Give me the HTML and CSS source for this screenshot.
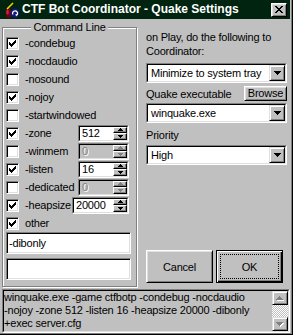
FILE: index.html
```html
<!DOCTYPE html>
<html>
<head>
<meta charset="utf-8">
<title>CTF Bot Coordinator - Quake Settings</title>
<link rel="stylesheet" href="styles.css">
</head>
<body>
<div class="window">
  <div class="titlebar">
    <svg class="appicon" width="16" height="16" viewBox="0 0 16 16">
      <ellipse cx="5.5" cy="11" rx="3" ry="5" fill="#700010"/>
      <ellipse cx="4.5" cy="10" rx="1.3" ry="2.5" fill="#b03040"/>
      <path d="M4 7 L10 1" stroke="#f0d000" stroke-width="1.6"/>
      <circle cx="12" cy="11" r="4.5" fill="#101880"/>
      <path d="M10 12.5 A2.4 2.4 0 1 1 13.5 13.2" stroke="#fff" stroke-width="1.2" fill="none"/>
      <path d="M12.5 12 L14.5 12.5 L13 14.5 Z" fill="#fff"/>
    </svg>
    <span class="title">CTF Bot Coordinator - Quake Settings</span>
    <button class="close" type="button" aria-label="Close">
      <svg width="8" height="7" viewBox="0 0 8 7"><path d="M0 0h2v1H0zM6 0h2v1H6zM1 1h2v1H1zM5 1h2v1H5zM2 2h4v1H2zM3 3h2v1H3zM2 4h4v1H2zM1 5h2v1H1zM5 5h2v1H5zM0 6h2v1H0zM6 6h2v1H6z" fill="#000"/></svg>
    </button>
  </div>

  <div class="main">
    <div class="group">
      <span class="legend">Command Line</span>

      <div class="row"><span class="cb"><svg width="7" height="7" viewBox="0 0 7 7"><path d="M6 0h1v1H6zM5 1h2v1H5zM0 2h1v1H0zM4 2h3v1H4zM0 3h2v1H0zM3 3h3v1H3zM0 4h5v1H0zM1 5h3v1H1zM2 6h1v1H2z"/></svg></span><span class="lbl">-condebug</span></div>
      <div class="row"><span class="cb"><svg width="7" height="7" viewBox="0 0 7 7"><path d="M6 0h1v1H6zM5 1h2v1H5zM0 2h1v1H0zM4 2h3v1H4zM0 3h2v1H0zM3 3h3v1H3zM0 4h5v1H0zM1 5h3v1H1zM2 6h1v1H2z"/></svg></span><span class="lbl">-nocdaudio</span></div>
      <div class="row"><span class="cb"></span><span class="lbl">-nosound</span></div>
      <div class="row"><span class="cb"><svg width="7" height="7" viewBox="0 0 7 7"><path d="M6 0h1v1H6zM5 1h2v1H5zM0 2h1v1H0zM4 2h3v1H4zM0 3h2v1H0zM3 3h3v1H3zM0 4h5v1H0zM1 5h3v1H1zM2 6h1v1H2z"/></svg></span><span class="lbl">-nojoy</span></div>
      <div class="row"><span class="cb"></span><span class="lbl">-startwindowed</span></div>

      <div class="row"><span class="cb"><svg width="7" height="7" viewBox="0 0 7 7"><path d="M6 0h1v1H6zM5 1h2v1H5zM0 2h1v1H0zM4 2h3v1H4zM0 3h2v1H0zM3 3h3v1H3zM0 4h5v1H0zM1 5h3v1H1zM2 6h1v1H2z"/></svg></span><span class="lbl">-zone</span>
        <span class="spin"><span class="spin-in"><span class="spin-text">512</span><span class="spin-btns"><span class="sbtn"><svg width="5" height="3" viewBox="0 0 5 3"><path d="M2 0h1v1h1v1h1v1H0V2h1V1h1z"/></svg></span><span class="sbtn"><svg width="5" height="3" viewBox="0 0 5 3"><path d="M0 0h5v1H4v1H3v1H2V2H1V1H0z"/></svg></span></span></span></span>
      </div>
      <div class="row"><span class="cb"></span><span class="lbl">-winmem</span>
        <span class="spin disabled"><span class="spin-in"><span class="spin-text">0</span><span class="spin-btns"><span class="sbtn"><svg width="5" height="3" viewBox="0 0 5 3"><path d="M2 0h1v1h1v1h1v1H0V2h1V1h1z"/></svg></span><span class="sbtn"><svg width="5" height="3" viewBox="0 0 5 3"><path d="M0 0h5v1H4v1H3v1H2V2H1V1H0z"/></svg></span></span></span></span>
      </div>
      <div class="row"><span class="cb"><svg width="7" height="7" viewBox="0 0 7 7"><path d="M6 0h1v1H6zM5 1h2v1H5zM0 2h1v1H0zM4 2h3v1H4zM0 3h2v1H0zM3 3h3v1H3zM0 4h5v1H0zM1 5h3v1H1zM2 6h1v1H2z"/></svg></span><span class="lbl">-listen</span>
        <span class="spin"><span class="spin-in"><span class="spin-text">16</span><span class="spin-btns"><span class="sbtn"><svg width="5" height="3" viewBox="0 0 5 3"><path d="M2 0h1v1h1v1h1v1H0V2h1V1h1z"/></svg></span><span class="sbtn"><svg width="5" height="3" viewBox="0 0 5 3"><path d="M0 0h5v1H4v1H3v1H2V2H1V1H0z"/></svg></span></span></span></span>
      </div>
      <div class="row"><span class="cb"></span><span class="lbl">-dedicated</span>
        <span class="spin disabled"><span class="spin-in"><span class="spin-text">0</span><span class="spin-btns"><span class="sbtn"><svg width="5" height="3" viewBox="0 0 5 3"><path d="M2 0h1v1h1v1h1v1H0V2h1V1h1z"/></svg></span><span class="sbtn"><svg width="5" height="3" viewBox="0 0 5 3"><path d="M0 0h5v1H4v1H3v1H2V2H1V1H0z"/></svg></span></span></span></span>
      </div>
      <div class="row"><span class="cb"><svg width="7" height="7" viewBox="0 0 7 7"><path d="M6 0h1v1H6zM5 1h2v1H5zM0 2h1v1H0zM4 2h3v1H4zM0 3h2v1H0zM3 3h3v1H3zM0 4h5v1H0zM1 5h3v1H1zM2 6h1v1H2z"/></svg></span><span class="lbl">-heapsize</span>
        <span class="spin wide"><span class="spin-in"><span class="spin-text">20000</span><span class="spin-btns"><span class="sbtn"><svg width="5" height="3" viewBox="0 0 5 3"><path d="M2 0h1v1h1v1h1v1H0V2h1V1h1z"/></svg></span><span class="sbtn"><svg width="5" height="3" viewBox="0 0 5 3"><path d="M0 0h5v1H4v1H3v1H2V2H1V1H0z"/></svg></span></span></span></span>
      </div>
      <div class="row"><span class="cb"><svg width="7" height="7" viewBox="0 0 7 7"><path d="M6 0h1v1H6zM5 1h2v1H5zM0 2h1v1H0zM4 2h3v1H4zM0 3h2v1H0zM3 3h3v1H3zM0 4h5v1H0zM1 5h3v1H1zM2 6h1v1H2z"/></svg></span><span class="lbl">other</span></div>

      <div class="field">-dibonly</div>
      <div class="field field-2"></div>
    </div>

    <div class="side">
      <p class="note">on Play, do the following to<br>Coordinator:</p>
      <div class="combo combo-1"><div class="combo-in"><span class="combo-val">Minimize to system tray</span><span class="drop"><svg width="7" height="4" viewBox="0 0 7 4"><path d="M0 0h7v1H6v1H5v1H4v1H3V3H2V2H1V1H0z"/></svg></span></div></div>
      <div class="exe-row"><span class="exe-label">Quake executable</span><button class="btn browse" type="button">Browse</button></div>
      <div class="combo combo-2"><div class="combo-in"><span class="combo-val">winquake.exe</span><span class="drop"><svg width="7" height="4" viewBox="0 0 7 4"><path d="M0 0h7v1H6v1H5v1H4v1H3V3H2V2H1V1H0z"/></svg></span></div></div>
      <p class="prio">Priority</p>
      <div class="combo combo-3"><div class="combo-in"><span class="combo-val">High</span><span class="drop"><svg width="7" height="4" viewBox="0 0 7 4"><path d="M0 0h7v1H6v1H5v1H4v1H3V3H2V2H1V1H0z"/></svg></span></div></div>
      <div class="actions">
        <button class="btn push" type="button">Cancel</button>
        <button class="btn push default" type="button"><span class="focus">OK</span></button>
      </div>
    </div>
  </div>

  <div class="output">
    <div class="output-in">
      <div class="output-text">winquake.exe -game ctfbotp -condebug -nocdaudio<br>-nojoy -zone 512 -listen 16 -heapsize 20000 -dibonly<br>+exec server.cfg</div>
      <div class="scrollbar">
        <span class="sb-btn"><svg width="8" height="5" viewBox="0 0 8 5"><path d="M4 1h1v1h1v1h1v1h1v1H1V4h1V3h1V2h1z" fill="#fff"/><path d="M3 0h1v1h1v1h1v1h1v1H0V3h1V2h1V1h1z" fill="#808080"/></svg></span>
        <span class="sb-track"></span>
        <span class="sb-btn"><svg width="8" height="5" viewBox="0 0 8 5"><path d="M1 1h7v1H7v1H6v1H5v1H4V4H3V3H2V2H1z" fill="#fff"/><path d="M0 0h7v1H6v1H5v1H4v1H3V3H2V2H1V1H0z" fill="#808080"/></svg></span>
      </div>
    </div>
  </div>
</div>
</body>
</html>
```

FILE: styles.css
```css
* { box-sizing: border-box; }

html, body {
  margin: 0;
  padding: 0;
}

body {
  width: 293px;
  height: 335px;
  overflow: hidden;
  background: #c0c0c0;
  font-family: "Liberation Sans", Arial, sans-serif;
  font-size: 11px;
  letter-spacing: -0.2px;
  color: #000;
}

button {
  font: inherit;
  letter-spacing: inherit;
  color: inherit;
  margin: 0;
  padding: 0;
}

.window {
  width: 293px;
  height: 335px;
  background: #c0c0c0;
  border-right: 1px solid #000;
  border-bottom: 1px solid #000;
  box-shadow: inset -1px -1px 0 #808080;
  padding: 0 2px 1px 2px;
  display: flex;
  flex-direction: column;
}

/* Title bar */
.titlebar {
  flex: none;
  height: 19px;
  margin-left: -2px;
  background: #00240f;
  display: flex;
  align-items: center;
  padding: 0 3px 0 3px;
  color: #fff;
}

.appicon {
  flex: none;
  margin-right: 3px;
}

.title {
  flex: 1;
  font-weight: bold;
  font-size: 12px;
  letter-spacing: 0;
  white-space: nowrap;
  line-height: 19px;
}

.close {
  flex: none;
  width: 16px;
  height: 14px;
  background: #c0c0c0;
  border: 1px solid;
  border-color: #fff #000 #000 #fff;
  box-shadow: inset 1px 1px 0 #dfdfdf, inset -1px -1px 0 #808080;
  display: flex;
  align-items: center;
  justify-content: center;
  padding-bottom: 1px;
}

/* Main area */
.main {
  flex: none;
  display: flex;
  height: 260px;
  margin-top: 8px;
}

.group {
  flex: none;
  width: 135px;
  border: 1px solid #808080;
  box-shadow: inset 1px 1px 0 #fff, 1px 1px 0 #fff;
  display: flex;
  flex-direction: column;
}

.legend {
  align-self: center;
  margin-top: -8px;
  margin-bottom: 0;
  padding: 0 2px;
  background: #c0c0c0;
  line-height: 14px;
}

.row {
  flex: none;
  display: flex;
  align-items: center;
  height: 18px;
  padding: 0 7px 0 3px;
}

.cb {
  flex: none;
  width: 13px;
  height: 13px;
  border: 1px solid;
  border-color: #808080 #fff #fff #808080;
  background: #fff;
  box-shadow: inset 1px 1px 0 #000, inset -1px -1px 0 #dfdfdf;
  display: flex;
  align-items: center;
  justify-content: center;
  margin-right: 6px;
}

.cb svg { fill: #000; }

.lbl {
  flex: 1;
  white-space: nowrap;
}

.spin {
  flex: none;
  width: 51px;
  height: 17px;
  display: flex;
  border: 1px solid;
  border-color: #808080 #fff #fff #808080;
}

.spin.wide { width: 57px; }

.spin-in {
  flex: 1;
  display: flex;
  border: 1px solid;
  border-color: #000 #dfdfdf #dfdfdf #000;
  background: #fff;
}

.spin-text {
  flex: 1;
  padding-left: 2px;
  line-height: 13px;
  white-space: nowrap;
  overflow: hidden;
}

.spin-btns {
  flex: none;
  width: 14px;
  display: flex;
  flex-direction: column;
}

.sbtn {
  flex: 1;
  background: #c0c0c0;
  border: 1px solid;
  border-color: #fff #000 #000 #fff;
  box-shadow: inset -1px -1px 0 #808080;
  display: flex;
  align-items: center;
  justify-content: center;
}

.sbtn svg { fill: #000; }

.spin.disabled .spin-in { background: #c0c0c0; }
.spin.disabled .spin-text { color: #808080; text-shadow: 1px 1px 0 #fff; }
.spin.disabled .sbtn svg { fill: #808080; }

.field {
  flex: none;
  height: 22px;
  margin: 0 5px 0 3px;
  border: 1px solid;
  border-color: #808080 #fff #fff #808080;
  box-shadow: inset 1px 1px 0 #000, inset -1px -1px 0 #dfdfdf;
  background: #fff;
  padding: 0 2px;
  line-height: 20px;
}

.field-2 { margin-top: 4px; }

/* Right side */
.side {
  flex: 1;
  margin-left: 9px;
  padding: 3px 3px 4px 0;
  display: flex;
  flex-direction: column;
}

.note, .prio {
  margin: 0;
  line-height: 14px;
  white-space: nowrap;
}

.prio { margin-top: 5px; }

.combo {
  flex: none;
  height: 20px;
  border: 1px solid;
  border-color: #808080 #fff #fff #808080;
}

.combo-1 { margin-top: 5px; }
.combo-2 { margin-top: 2px; }
.combo-3 { margin-top: 3px; }

.combo-in {
  height: 100%;
  display: flex;
  border: 1px solid;
  border-color: #000 #dfdfdf #dfdfdf #000;
  background: #fff;
}

.combo-val {
  flex: 1;
  padding-left: 3px;
  line-height: 16px;
  white-space: nowrap;
}

.drop {
  flex: none;
  width: 16px;
  background: #c0c0c0;
  border: 1px solid;
  border-color: #dfdfdf #000 #000 #dfdfdf;
  box-shadow: inset 1px 1px 0 #fff, inset -1px -1px 0 #808080;
  display: flex;
  align-items: center;
  justify-content: center;
}

.drop svg { fill: #000; }

.exe-row {
  flex: none;
  height: 15px;
  margin-top: 3px;
  display: flex;
  align-items: center;
  justify-content: space-between;
}

.exe-label { white-space: nowrap; }

.btn {
  background: #c0c0c0;
  border: 1px solid;
  border-color: #fff #000 #000 #fff;
  box-shadow: inset 1px 1px 0 #dfdfdf, inset -1px -1px 0 #808080;
  display: flex;
  align-items: center;
  justify-content: center;
}

.browse {
  width: 43px;
  height: 15px;
  line-height: 13px;
}

.actions {
  flex: none;
  margin-top: auto;
  display: flex;
  gap: 3px;
  height: 33px;
}

.push {
  width: 67px;
  height: 33px;
}

.push.default {
  border: 1px solid #000;
  box-shadow: inset 1px 1px 0 #fff, inset -1px -1px 0 #000, inset -2px -2px 0 #808080;
  padding: 3px;
}

.focus {
  flex: 1;
  align-self: stretch;
  border: 1px dotted #000;
  display: flex;
  align-items: center;
  justify-content: center;
}

/* Output */
.output {
  flex: none;
  margin-top: 2px;
  height: 44px;
  border: 1px solid;
  border-color: #808080 #fff #fff #808080;
}

.output-in {
  height: 100%;
  display: flex;
  border: 1px solid;
  border-color: #000 #dfdfdf #dfdfdf #000;
}

.output-text {
  flex: 1;
  line-height: 13px;
  white-space: nowrap;
  overflow: hidden;
}

.scrollbar {
  flex: none;
  width: 16px;
  display: flex;
  flex-direction: column;
}

.sb-btn {
  flex: none;
  height: 14px;
  background: #c0c0c0;
  border: 1px solid;
  border-color: #dfdfdf #000 #000 #dfdfdf;
  box-shadow: inset 1px 1px 0 #fff, inset -1px -1px 0 #808080;
  display: flex;
  align-items: center;
  justify-content: center;
}

.sb-track {
  flex: 1;
  background: repeating-conic-gradient(#fff 0 25%, #c0c0c0 0 50%) 0 0 / 2px 2px;
}
```
